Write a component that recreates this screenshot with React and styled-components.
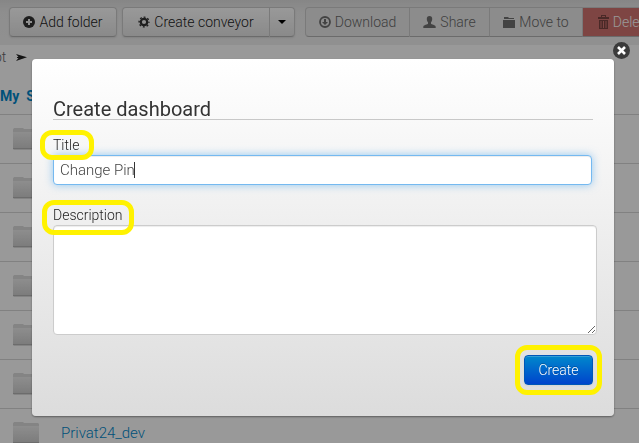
import React from "react";
import styled, { createGlobalStyle, css } from "styled-components";

const GlobalStyle = createGlobalStyle`
  * { box-sizing: border-box; }
  body {
    margin: 0;
    background: #fff;
    color: #333;
    font: 300 14px/20px Roboto, "Liberation Sans", sans-serif;
  }
  button, input, textarea { font: inherit; }
`;

const Page = styled.div`
  height: 100vh;
  overflow: hidden;
`;

const Toolbar = styled.div`
  display: flex;
  align-items: flex-start;
  height: 45px;
  padding: 7px 0 0 9px;
  background: linear-gradient(#e0e0e0, #ededed 12px, #f1f1f1);
`;

const ButtonGroup = styled.div`
  display: flex;
  flex: none;
  margin-right: ${(p) => p.$gap}px;
  border-radius: 4px;
  box-shadow: ${(p) => (p.$flat ? "none" : "0 1px 2px rgba(0, 0, 0, 0.1)")};
`;

const toneStyles = {
  normal: css`
    color: #222;
    background: linear-gradient(#fff, #e6e6e6);
  `,
  muted: css`
    color: #6a6a6a;
    background: #e9e9e9;
  `,
  danger: css`
    color: #fff;
    background: #d27470;
  `,
};

const ToolButton = styled.button`
  display: flex;
  align-items: center;
  justify-content: center;
  gap: 4px;
  width: ${(p) => p.$width}px;
  height: 30px;
  padding: 0;
  border: 1px solid #ccc;
  border-bottom-color: #b3b3b3;
  white-space: nowrap;
  ${(p) => toneStyles[p.$tone || "normal"]}

  & + & { border-left-width: 0; }
  &:first-child { border-radius: 4px 0 0 4px; }
  &:last-child { border-radius: 0 4px 4px 0; }
  &:only-child { border-radius: 4px; }
`;

const Icon = styled.svg`
  flex: none;
  display: block;
  width: ${(p) => p.$w || 14}px;
  height: ${(p) => p.$h || 14}px;
  color: ${(p) => p.$color || "#333"};
  fill: currentColor;
`;

const Breadcrumb = styled.nav`
  display: flex;
  align-items: center;
  gap: 10px;
  height: 24px;
  margin-left: -6px;
  color: #666;
`;

const Listing = styled.table`
  width: 100%;
  border-collapse: collapse;
  table-layout: fixed;
`;

const Heading = styled.th`
  height: 45px;
  padding: 10px 0 0;
  text-align: left;
  font-weight: 700;
  white-space: pre;
  color: #08c;
`;

const Cell = styled.td`
  height: 49px;
  padding: 0 0 0 13px;
  border-top: 1px solid #d8d8d8;
`;

const Entry = styled.a`
  display: flex;
  align-items: center;
  gap: 22px;
  color: #08c;
  font-size: 15px;
  text-decoration: none;
`;

const Backdrop = styled.div`
  position: fixed;
  inset: 0;
  padding: 59px 25px 0 32px;
  background: rgba(0, 0, 0, 0.4);
`;

const Dialog = styled.form`
  position: relative;
  padding: 40px 21px 31px;
  border-radius: 4px;
  background: linear-gradient(#fff, #dcdcdc);
  box-shadow: 0 1px 2px rgba(0, 0, 0, 0.4);
`;

const CloseButton = styled.button`
  position: absolute;
  top: -17px;
  right: -16px;
  display: flex;
  padding: 0;
  border: 0;
  background: none;
`;

const Title = styled.h1`
  margin: 0 0 15px;
  border-bottom: 1px solid #c8c8c8;
  font-size: 20px;
  font-weight: 400;
  line-height: 20px;
`;

const Label = styled.label`
  position: relative;
  z-index: 1;
  display: block;
  width: max-content;
  color: #222;
`;

const Marker = styled.span`
  position: absolute;
  inset: ${(p) => p.$inset};
  border: 5px solid #fff200;
  border-radius: 12px;
  pointer-events: none;
`;

const Field = styled.div`
  position: relative;
  margin-bottom: 20px;
`;

const TextInput = styled.input`
  display: block;
  width: calc(100% - 1px);
  height: 30px;
  padding: 4px 6px;
  border: 1px solid #75b9f0;
  border-radius: 4px;
  outline: 0;
  color: #444;
  caret-color: transparent;
  font-size: 15px;
  background: #fff;
  box-shadow: inset 0 1px 1px rgba(0, 0, 0, 0.075), 0 0 8px rgba(82, 168, 236, 0.6);
`;

const Caret = styled.span`
  position: absolute;
  top: 7px;
  left: 81px;
  width: 1px;
  height: 16px;
  background: #333;
  pointer-events: none;
`;

const TextArea = styled.textarea`
  display: block;
  width: calc(100% + 4px);
  height: 110px;
  padding: 4px 6px;
  border: 1px solid #ccc;
  border-radius: 4px;
  outline: 0;
  color: #444;
  font-size: 15px;
  background: #fff;
  box-shadow: inset 0 1px 1px rgba(0, 0, 0, 0.075);
  resize: vertical;
`;

const Actions = styled.div`
  display: flex;
  justify-content: flex-end;
  margin-top: 20px;
`;

const ActionSlot = styled.div`
  position: relative;
`;

const SubmitButton = styled.button`
  display: block;
  width: 69px;
  height: 30px;
  padding: 0;
  border: 1px solid #0057b8;
  border-radius: 4px;
  color: #fff;
  background: linear-gradient(#0088cc, #0044cc);
  text-shadow: 0 -1px 0 rgba(0, 0, 0, 0.25);
  box-shadow: inset 0 1px 0 rgba(255, 255, 255, 0.2), 0 1px 2px rgba(0, 0, 0, 0.05);
`;

const PlusIcon = () => (
  <Icon $w={12} $h={12} viewBox="0 0 12 12" aria-hidden="true">
    <circle cx="6" cy="6" r="6" />
    <path d="M5 3h2v2h2v2H7v2H5V7H3V5h2z" fill="#eee" />
  </Icon>
);

const GearIcon = () => (
  <Icon $w={12} $h={12} viewBox="0 0 12 12" aria-hidden="true">
    <circle cx="6" cy="6" r="3.2" fill="none" stroke="currentColor" strokeWidth="2.2" />
    <circle
      cx="6"
      cy="6"
      r="4.9"
      fill="none"
      stroke="currentColor"
      strokeWidth="1.4"
      strokeDasharray="1.924 1.924"
      strokeDashoffset="0.962"
    />
  </Icon>
);

const CaretIcon = () => (
  <Icon $w={8} $h={4} $color="#000" viewBox="0 0 8 4" aria-hidden="true">
    <path d="M0 0h8L4 4z" />
  </Icon>
);

const DownloadIcon = () => (
  <Icon $w={12} $h={12} $color="#707070" viewBox="0 0 12 12" aria-hidden="true">
    <circle cx="6" cy="6" r="5" fill="none" stroke="currentColor" strokeWidth="1.8" />
    <path d="M5 3h2v3h2L6 9 3 6h2z" />
  </Icon>
);

const PersonIcon = () => (
  <Icon $w={13} $h={12} $color="#707070" viewBox="0 0 13 12" aria-hidden="true">
    <path d="M6.5 0C8.3 0 9.3 1.2 9.2 3c0 1.6-.6 2.6-1.2 3.3v1.4c.3.9 4.5 1.100 4.700 3V12H.3v-1.300C.5 8.800 4.700 8.600 5 7.700V6.300C4.400 5.600 3.800 4.600 3.800 3 3.700 1.200 4.700 0 6.500 0z" />
  </Icon>
);

const SmallFolderIcon = () => (
  <Icon $w={12} $h={11} $color="#707070" viewBox="0 0 12 11" aria-hidden="true">
    <path d="M1 0h4l1 1h5v1H1zM0 3h12v8H0z" />
  </Icon>
);

const TrashIcon = () => (
  <Icon $w={11} $h={14} $color="#7c4542" viewBox="0 0 11 14" aria-hidden="true">
    <path
      fillRule="evenodd"
      d="M3 0h5v2h3v2H0V2h3zm1 1v1h3V1zM1 5h9v9H1zm1.500 1v7h1V6zm2.500 0v7h1V6zm2.500 0v7h1V6z"
    />
  </Icon>
);

const ArrowIcon = () => (
  <Icon $w={11} $h={7} $color="#222" viewBox="0 0 11 7" aria-hidden="true">
    <path d="M0 0l11 3.300L0 7l2.500-3H1V3h1.500z" />
  </Icon>
);

const FolderIcon = () => (
  <Icon $w={26} $h={22} viewBox="0 0 26 22" aria-hidden="true">
    <defs>
      <linearGradient id="folderFill" x1="0" y1="0" x2="0" y2="1">
        <stop offset="0" stopColor="#ececec" />
        <stop offset="1" stopColor="#d0d0d0" />
      </linearGradient>
    </defs>
    <path d="M0 1.500L1 0h9l1 1h14l1 1v19l-1 1H1l-1-1z" fill="#dcdcdc" />
    <path d="M0 4h26v16H0z" fill="url(#folderFill)" />
    <path d="M0 20h26v1H0z" fill="#b5b5b5" />
  </Icon>
);

const CloseIcon = () => (
  <Icon $w={17} $h={17} $color="#3b3b3b" viewBox="0 0 17 17" aria-hidden="true">
    <circle cx="8.500" cy="8.500" r="8.500" />
    <path d="M5 5l7 7M12 5l-7 7" stroke="#fff" strokeWidth="2.600" />
  </Icon>
);

const entries = ["", "", "", "", "", "", "Privat24_dev"];

export default function App() {
  return (
    <>
      <GlobalStyle />
      <Page>
        <Toolbar>
          <ButtonGroup $gap={5}>
            <ToolButton type="button" $width={108}><PlusIcon />Add folder</ToolButton>
          </ButtonGroup>
          <ButtonGroup $gap={10}>
            <ToolButton type="button" $width={148}><GearIcon />Create conveyor</ToolButton>
            <ToolButton type="button" $width={25} aria-label="More"><CaretIcon /></ToolButton>
          </ButtonGroup>
          <ButtonGroup $gap={0} $flat>
            <ToolButton type="button" $tone="muted" $width={105}><DownloadIcon />Download</ToolButton>
            <ToolButton type="button" $tone="muted" $width={80}><PersonIcon />Share</ToolButton>
            <ToolButton type="button" $tone="muted" $width={93}><SmallFolderIcon />Move to</ToolButton>
            <ToolButton type="button" $tone="danger" $width={84}><TrashIcon />Delete</ToolButton>
          </ButtonGroup>
        </Toolbar>
        <Breadcrumb>ot<ArrowIcon /></Breadcrumb>
        <Listing>
          <thead>
            <tr><Heading>My  S</Heading></tr>
          </thead>
          <tbody>
            {entries.map((name, i) => (
              <tr key={i}>
                <Cell><Entry href="#" aria-label={name || "Folder"}><FolderIcon />{name}</Entry></Cell>
              </tr>
            ))}
          </tbody>
        </Listing>
      </Page>
      <Backdrop>
        <Dialog role="dialog" aria-labelledby="dialog-title">
          <CloseButton type="button" aria-label="Close"><CloseIcon /></CloseButton>
          <Title id="dialog-title">Create dashboard</Title>
          <Label htmlFor="title">Title<Marker $inset="-5px -15px -5px -13px" /></Label>
          <Field>
            <TextInput id="title" defaultValue="Change Pin" autoFocus />
            <Caret />
          </Field>
          <Label htmlFor="description">Description<Marker $inset="-5px -11px -10px -11px" /></Label>
          <TextArea id="description" />
          <Actions>
            <ActionSlot>
              <SubmitButton type="submit">Create</SubmitButton>
              <Marker $inset="-10px -9px" />
            </ActionSlot>
          </Actions>
        </Dialog>
      </Backdrop>
    </>
  );
}
